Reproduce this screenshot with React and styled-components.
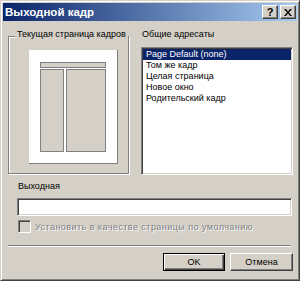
import styled, { createGlobalStyle } from "styled-components"

const Global = createGlobalStyle`
  html, body { margin: 0; padding: 0; background: #d4d0c8; }
  * { box-sizing: border-box; }
`

const targets = [
    "Page Default (none)",
    "Том же кадр",
    "Целая страница",
    "Новое окно",
    "Родительский кадр",
]

export default function App() {
    return (
        <>
            <Global />
            <Window>
                <TitleBar>
                    <Title>Выходной кадр</Title>
                    <CaptionButtons>
                        <CaptionButton><Help>?</Help></CaptionButton>
                        <CaptionButton>
                            <svg width="8" height="7" viewBox="0 0 8 7">
                                <path d="M0 0h2l2 2.5L6 0h2L5 3.5 8 7H6L4 4.5 2 7H0l3-3.5z" fill="#000" />
                            </svg>
                        </CaptionButton>
                    </CaptionButtons>
                </TitleBar>

                <TopRow>
                    <GroupBox>
                        <Legend>Текущая страница кадров</Legend>
                        <Page>
                            <Frame $wide />
                            <Frame />
                            <Frame />
                        </Page>
                    </GroupBox>
                    <TargetColumn>
                        <Label>Общие адресаты</Label>
                        <ListBox>
                            {targets.map((t, i) => (
                                <Item key={t} $selected={i === 0}>{t}</Item>
                            ))}
                        </ListBox>
                    </TargetColumn>
                </TopRow>

                <TargetSection>
                    <Label>Выходная</Label>
                    <TextInput />
                    <CheckRow>
                        <CheckBox />
                        <DisabledText>Установить в качестве страницы по умолчанию</DisabledText>
                    </CheckRow>
                </TargetSection>

                <Separator />

                <ButtonRow>
                    <Button $default>OK</Button>
                    <Button>Отмена</Button>
                </ButtonRow>
            </Window>
        </>
    )
}

const Window = styled.div`
    width: 300px;
    height: 281px;
    padding: 2px;
    background: #d4d0c8;
    border: 1px solid;
    border-color: #d4d0c8 #404040 #404040 #d4d0c8;
    box-shadow: inset 1px 1px 0 #fff, inset -1px -1px 0 #808080;
    font-family: "Liberation Sans", Arial, sans-serif;
    font-size: 9px;
    color: #000;
    display: flex;
    flex-direction: column;
`

const TitleBar = styled.div`
    height: 18px;
    padding: 0 1px 0 2px;
    display: flex;
    align-items: center;
    justify-content: space-between;
    background: linear-gradient(to right, #0a246a, #a6caf0);
`

const Title = styled.span`
    color: #fff;
    font-weight: 700;
    font-size: 11.5px;
`

const CaptionButtons = styled.div`
    display: flex;
    gap: 2px;
`

const CaptionButton = styled.div`
    width: 16px;
    height: 14px;
    background: #d4d0c8;
    border: 1px solid;
    border-color: #fff #404040 #404040 #fff;
    box-shadow: inset -1px -1px 0 #808080;
    display: flex;
    align-items: center;
    justify-content: center;
`

const Help = styled.span`
    font-weight: 700;
    font-size: 11px;
    line-height: 11px;
`

const TopRow = styled.div`
    display: flex;
    align-items: flex-start;
    margin-top: 7px;
`

const GroupBox = styled.fieldset`
    margin: 0 0 0 5px;
    padding: 6px 0 0 6px;
    width: 121px;
    min-width: 0;
    height: 146px;
    border: 1px solid #808080;
    box-shadow: inset 1px 1px 0 #fff, 1px 1px 0 #fff;
`

const Legend = styled.legend`
    margin-left: 0;
    padding: 0 2px 4px 2px;
    line-height: 12px;
    white-space: nowrap;
    background: #d4d0c8;
`

const Page = styled.div`
    margin-left: 14px;
    width: 89px;
    height: 114px;
    padding: 12px 11px 11px 11px;
    background: #fff;
    border-right: 1px solid #808080;
    border-bottom: 1px solid #808080;
    display: grid;
    grid-template-columns: 24px 40px;
    grid-template-rows: 6px 83px;
    gap: 1px 2px;
`

const Frame = styled.div`
    grid-column: ${p => (p.$wide ? "1 / 3" : "auto")};
    border: 1px solid #808080;
    background: #d4d0c8;
`

const TargetColumn = styled.div`
    margin-left: 12px;
    display: flex;
    flex-direction: column;
`

const Label = styled.div`
    line-height: 12px;
    padding-left: 1px;
`

const ListBox = styled.div`
    margin-top: 7px;
    width: 152px;
    height: 128px;
    background: #fff;
    border: 1px solid;
    border-color: #808080 #fff #fff #808080;
    box-shadow: inset 1px 1px 0 #404040, inset -1px -1px 0 #d4d0c8;
    padding: 1px;
`

const Item = styled.div`
    height: 11px;
    line-height: 11px;
    padding-left: 3px;
    white-space: nowrap;
    background: ${p => (p.$selected ? "#0a246a" : "transparent")};
    color: ${p => (p.$selected ? "#fff" : "#000")};
`

const TargetSection = styled.div`
    margin: 5px 0 0 14px;
    display: flex;
    flex-direction: column;
`

const TextInput = styled.div`
    margin-top: 6px;
    width: 275px;
    height: 18px;
    background: #fff;
    border: 1px solid;
    border-color: #808080 #fff #fff #808080;
    box-shadow: inset 1px 1px 0 #404040, inset -1px -1px 0 #d4d0c8;
`

const CheckRow = styled.div`
    margin-top: 4px;
    display: flex;
    align-items: center;
    gap: 4px;
    padding-left: 1px;
`

const CheckBox = styled.div`
    width: 13px;
    height: 13px;
    background: #d4d0c8;
    border: 1px solid;
    border-color: #808080 #fff #fff #808080;
    box-shadow: inset 1px 1px 0 #404040, inset -1px -1px 0 #d4d0c8;
`

const DisabledText = styled.span`
    color: #808080;
    text-shadow: 1px 1px 0 #fff;
    line-height: 12px;
    letter-spacing: 0.45px;
    white-space: nowrap;
`

const Separator = styled.div`
    margin: 12px 0 0 5px;
    width: 283px;
    height: 2px;
    border-top: 1px solid #808080;
    border-bottom: 1px solid #fff;
`

const ButtonRow = styled.div`
    margin-top: 6px;
    padding-right: 4px;
    display: flex;
    justify-content: flex-end;
    gap: 5px;
`

const Button = styled.div`
    width: ${p => (p.$default ? "62px" : "63px")};
    height: 18px;
    display: flex;
    align-items: center;
    justify-content: center;
    background: #d4d0c8;
    border: 1px solid;
    border-color: ${p => (p.$default ? "#000" : "#fff #404040 #404040 #fff")};
    box-shadow: ${p =>
        p.$default
            ? "inset 1px 1px 0 #fff, inset -1px -1px 0 #404040, inset -2px -2px 0 #808080"
            : "inset -1px -1px 0 #808080"};
`
